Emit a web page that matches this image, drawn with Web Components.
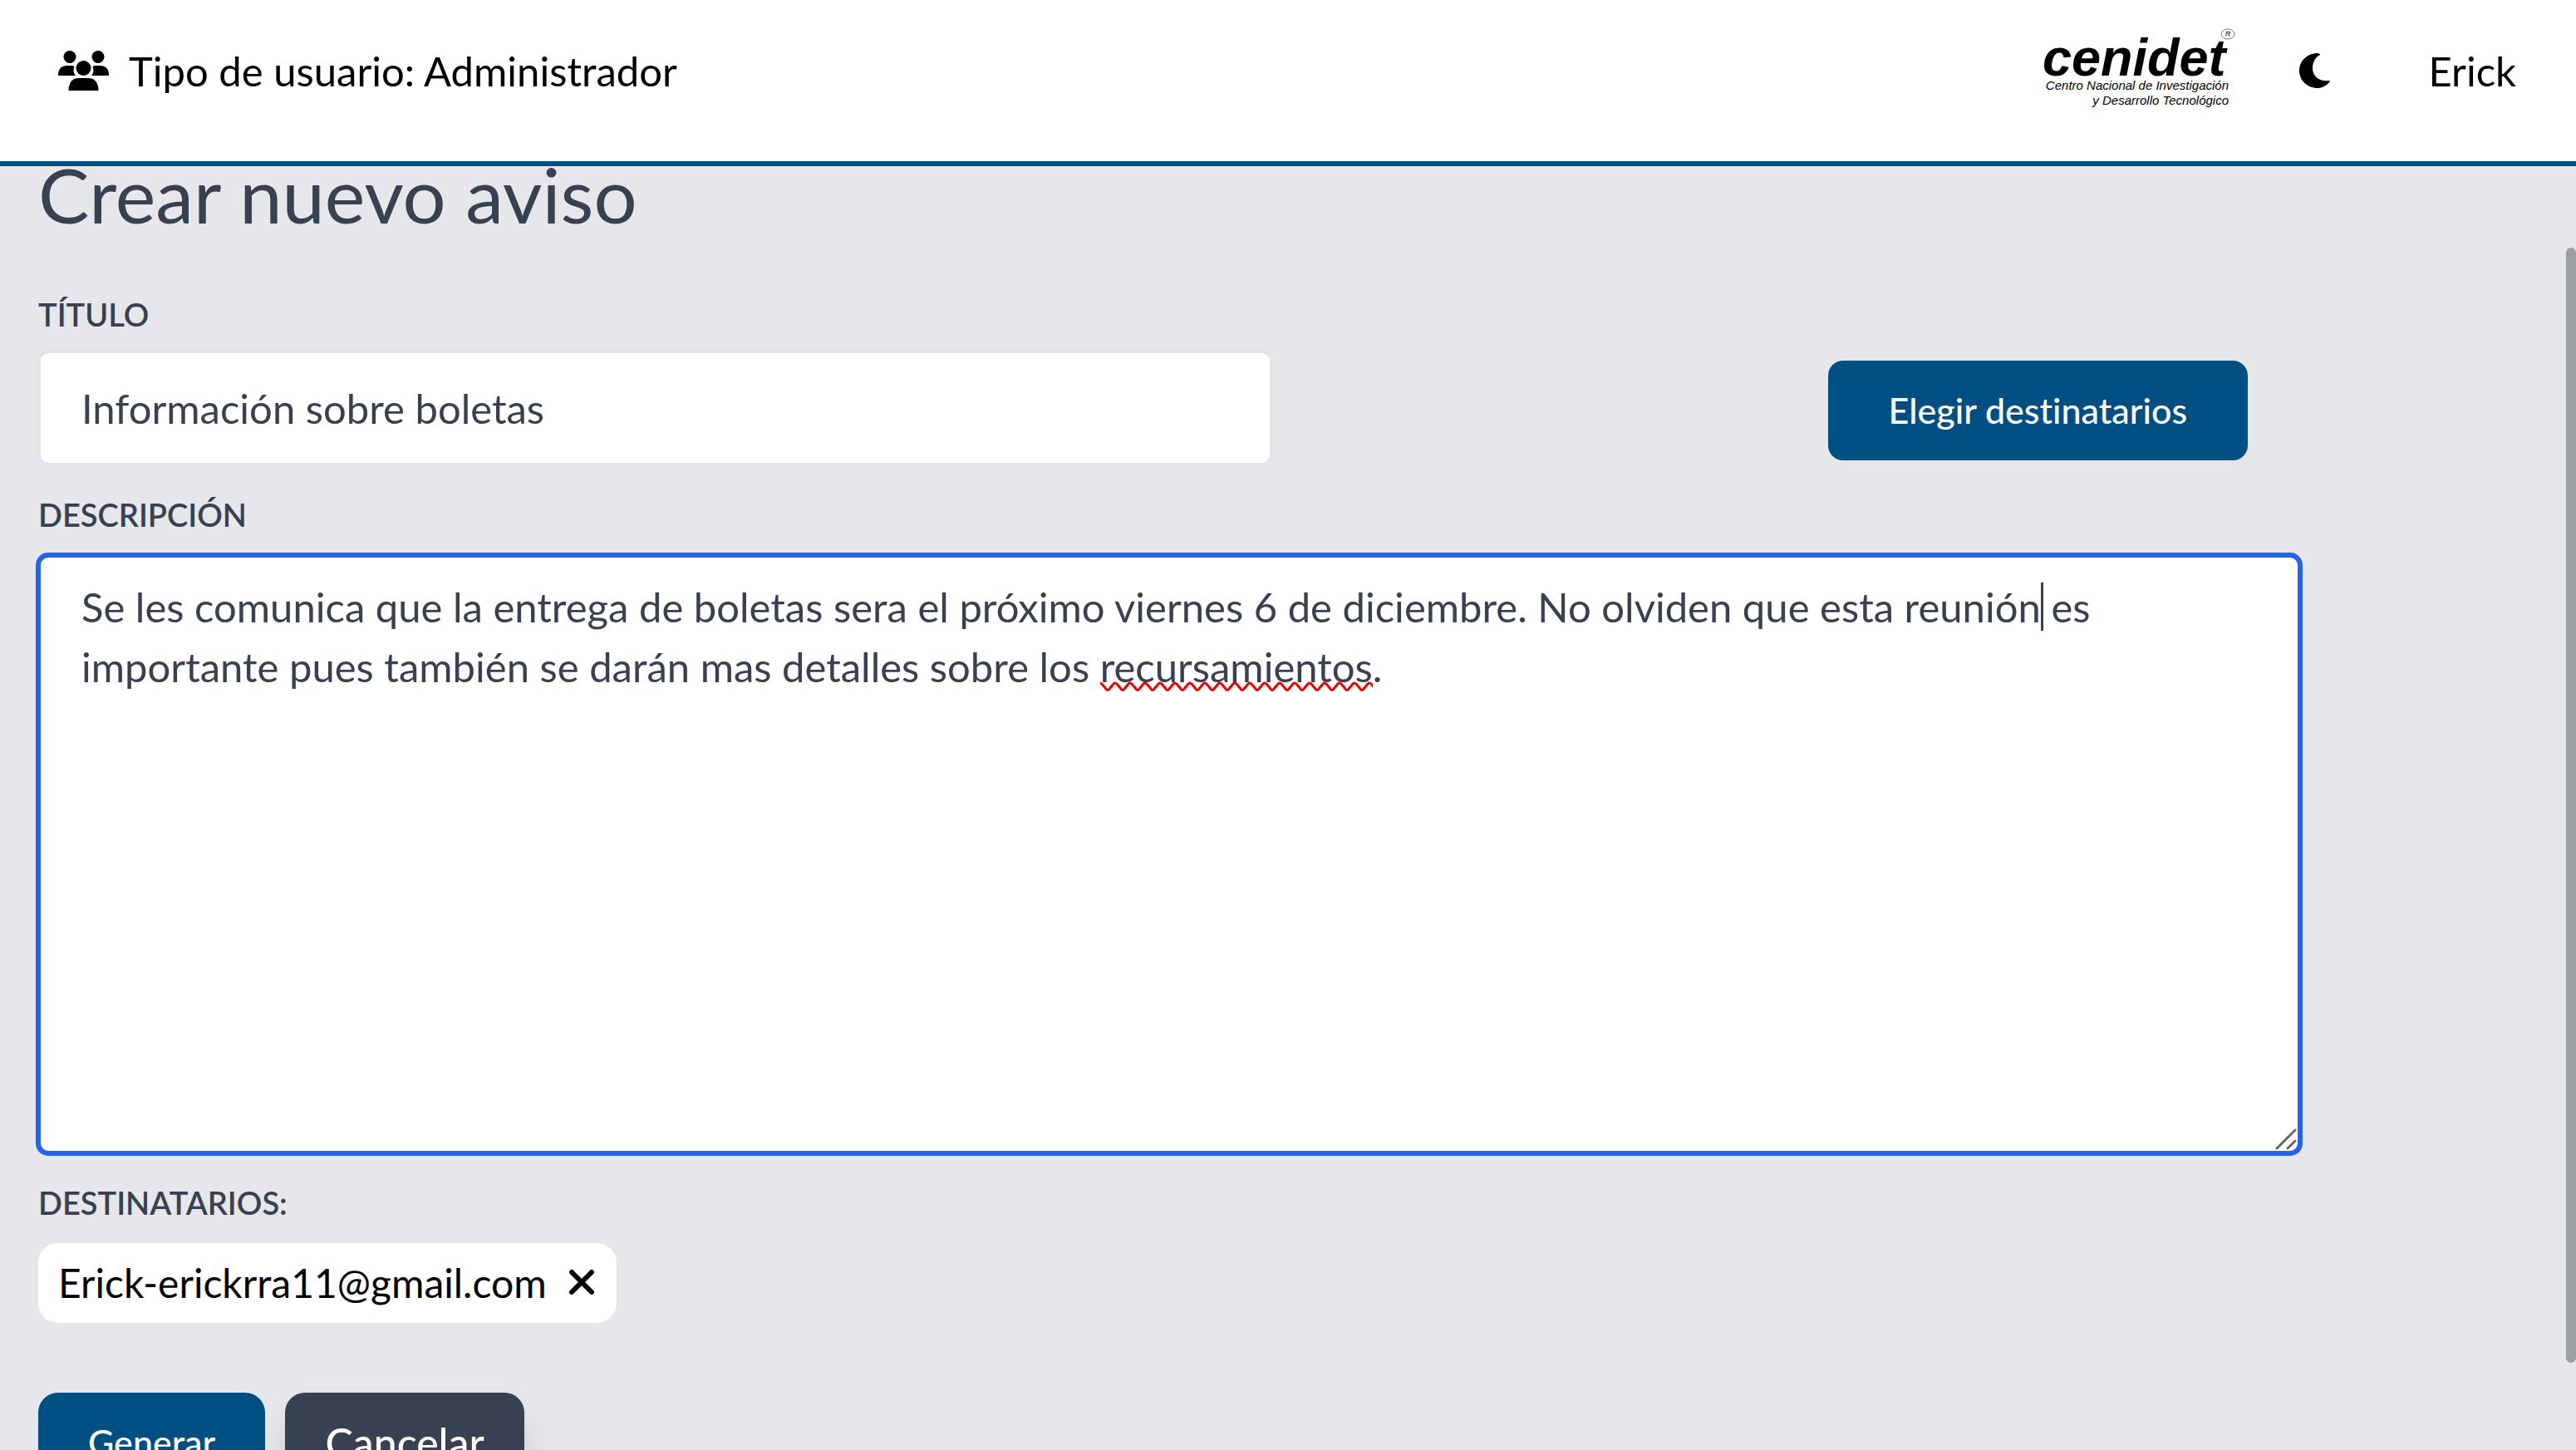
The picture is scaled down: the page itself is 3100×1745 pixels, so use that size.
<!DOCTYPE html>
<html lang="es">
<head>
<meta charset="utf-8">
<title>Crear nuevo aviso</title>
<style>
body { margin: 0; height: 100vh; overflow: hidden; background: #e5e7eb; color: #374151; font: 49px/72px Lato, "Liberation Sans", sans-serif; font-variant-ligatures: none; }
</style>
</head>
<body>
<aviso-app></aviso-app>
<script>
const define = (name, html, setup) => {
  const template = document.createElement('template');
  template.innerHTML = '<style>*{box-sizing:border-box}</style>' + html;
  customElements.define(name, class extends HTMLElement {
    connectedCallback() {
      if (this.shadowRoot) return;
      this.attachShadow({ mode: 'open' }).append(template.content.cloneNode(true));
      if (setup) setup.call(this, this.shadowRoot);
    }
  });
};

define('cenidet-logo', `
<style>
:host { display: block; }
svg { display: block; width: 240px; height: 100px; overflow: visible; font-family: "Liberation Sans", sans-serif; font-style: italic; }
</style>
<svg viewBox="0 0 240 100" role="img" aria-label="cenidet">
  <text x="7" y="56" font-size="63" font-weight="700">cenidet</text>
  <text x="231" y="73" font-size="15" text-anchor="end">Centro Nacional de Investigación</text>
  <text x="231" y="91" font-size="15" text-anchor="end">y Desarrollo Tecnológico</text>
  <ellipse cx="230" cy="6" rx="8" ry="6" fill="none" stroke="#777"/>
  <text x="230" y="9" font-size="9" text-anchor="middle">R</text>
</svg>`);

define('app-header', `
<style>
:host { display: block; flex: none; background: #fff; color: #000; border-bottom: 6px solid #004f83; }
header { display: flex; align-items: center; justify-content: space-between; height: 194px; padding: 0 72px 24px 70px; }
.user, .tools { display: flex; align-items: center; }
.user { gap: 24px; }
.people { width: 61px; height: 48px; }
cenidet-logo { margin-right: 76px; }
.theme { width: 37px; height: 42px; padding: 0; border: 0; background: none; margin-right: 119px; }
.theme svg { display: block; width: 37px; height: 42px; }
a { color: inherit; text-decoration: none; }
</style>
<header>
  <div class="user">
    <svg class="people" viewBox="0 0 61 48" aria-hidden="true">
      <circle cx="14" cy="7.500" r="7.500"/><circle cx="48" cy="7.500" r="7.500"/>
      <circle cx="30.500" cy="21" r="9"/>
      <path d="M0 30V28Q1 18 10 18H16Q18 18 19.500 19Q17 26 21 30ZM61 30V28Q60 18 51 18H45Q43 18 41.500 19Q44 26 40 30Z"/>
      <path d="M12.500 48V46Q14 33 25 33H36Q47 33 48.500 46V48Z"/>
    </svg>
    <span>Tipo de usuario: Administrador</span>
  </div>
  <div class="tools">
    <cenidet-logo></cenidet-logo>
    <button class="theme" type="button" aria-label="Modo oscuro"><svg viewBox="0 0 37 42"><path d="M22 0C10 0 0 9 0 21S10 42 22 42C28 42 33 39 37 34L36 33C25 35 16 28 16 18C16 11 19 5 25 2V1Z"/></svg></button>
    <a href="#perfil">Erick</a>
  </div>
</header>`);

define('primary-button', `
<style>
:host { display: block; }
button { display: block; height: 120px; padding: 0 var(--pad, 73px); border: 0; border-radius: var(--radius, 18px); background: #004f83; color: #fff; font: 500 43px/60px Lato, sans-serif; font-variant-ligatures: none; }
</style>
<button type="button"><slot></slot></button>`);

define('recipient-chip', `
<style>
:host { display: flex; align-items: center; width: max-content; height: 96px; gap: 24px; padding: 0 24px; background: #fff; color: #000; border-radius: 24px; font-size: 48px; }
button { padding: 0; border: 0; background: none; }
svg { display: block; width: 36px; height: 36px; }
</style>
<span><slot></slot></span>
<button type="button" aria-label="Quitar"><svg viewBox="0 0 36 36"><path d="M6 5L30 29M30 5L6 29" fill="none" stroke="#000" stroke-width="6" stroke-linecap="round"/></svg></button>`);

define('message-area', `
<style>
:host { display: block; }
label { display: block; font-size: 38px; line-height: 54px; font-weight: 600; margin-bottom: 22px; }
.box { position: relative; }
textarea, .mirror { display: block; width: 100%; padding: 23px 49px; border: 3px solid #2563eb; font: inherit; font-variant-ligatures: none; line-height: 72px; }
textarea { height: 720px; margin: 0; background: #fff; color: inherit; border-radius: 12px; box-shadow: 0 0 0 3px #2563eb; outline: 0; resize: none; overflow: hidden; }
.mirror { position: absolute; inset: 0; visibility: hidden; white-space: pre-wrap; }
.caret { position: absolute; width: 3px; height: 58px; background: #374151; }
.squiggle { position: absolute; height: 12px; }
.grip { position: absolute; right: 4px; bottom: 4px; width: 26px; height: 26px; }
</style>
<label for="text">DESCRIPCIÓN</label>
<div class="box">
  <textarea id="text" spellcheck="false">Se les comunica que la entrega de boletas sera el próximo viernes 6 de diciembre. No olviden que esta reunión es importante pues también se darán mas detalles sobre los recursamientos.</textarea>
  <span class="caret"></span>
  <svg class="squiggle" aria-hidden="true"><defs><pattern id="wave" width="18" height="12" patternUnits="userSpaceOnUse"><path d="M-2 3Q0 1 2 3L7 9Q9 12 11 9L16 3Q18 1 20 3" fill="none" stroke="#f00000" stroke-width="3"/></pattern></defs><rect width="100%" height="12" fill="url(#wave)"/></svg>
  <svg class="grip" viewBox="0 0 26 26" aria-hidden="true"><path d="M2 24L24 2M15 24L24 15" stroke="#666" stroke-width="3" stroke-linecap="round"/></svg>
</div>`, function (root) {
  const area = root.querySelector('textarea'), box = root.querySelector('.box');
  // Finds where a piece of the message falls by laying it out in a short-lived copy.
  const locate = (word) => {
    const mirror = document.createElement('div');
    mirror.className = 'mirror';
    mirror.textContent = area.value;
    box.append(mirror);
    const start = area.value.indexOf(word), range = document.createRange();
    range.setStart(mirror.firstChild, start);
    range.setEnd(mirror.firstChild, start + word.length);
    const r = range.getBoundingClientRect(), b = box.getBoundingClientRect();
    mirror.remove();
    return { left: r.left - b.left, right: r.right - b.left, middle: (r.top + r.bottom) / 2 - b.top };
  };
  const place = () => {
    const end = locate('reunión'), typo = locate('recursamientos');
    Object.assign(root.querySelector('.caret').style, { left: Math.round(end.right) + 'px', top: Math.round(end.middle - 29) + 'px' });
    Object.assign(root.querySelector('.squiggle').style, { left: Math.round(typo.left) + 'px', top: Math.round(typo.middle + 18) + 'px', width: Math.round(typo.right - typo.left) + 'px' });
  };
  place();
  addEventListener('resize', place);
});

define('aviso-form', `
<style>
:host { display: block; width: 90.5%; }
h1 { margin: 0 0 63px; font-size: 92px; line-height: 108px; font-weight: 400; }
.label { display: block; font-size: 38px; line-height: 54px; font-weight: 600; }
.row { display: grid; grid-template-columns: 6fr 5fr; align-items: end; margin: 17px 0 32px; }
input { display: block; width: 100%; height: 138px; padding: 0 49px; border: 3px solid #e2e4e8; border-radius: 12px; background: #fff; background-clip: padding-box; color: inherit; font: inherit; font-variant-ligatures: none; outline: 0; }
.row primary-button { justify-self: end; margin: 0 63px 6px 0; }
message-area { margin-bottom: 32px; }
recipient-chip { margin: 22px 0 84px; }
.actions { display: flex; gap: 24px; --pad: 60px; --radius: 24px; }
.cancel { height: 120px; padding: 0 48px; border: 0; border-radius: 24px; background: #374151; color: #fff; font: 500 50px/72px Lato, sans-serif; box-shadow: 0 30px 45px #0000001a; }
</style>
<form>
  <h1>Crear nuevo aviso</h1>
  <label class="label" for="title">TÍTULO</label>
  <div class="row">
    <input id="title" type="text" value="Información sobre boletas">
    <primary-button>Elegir destinatarios</primary-button>
  </div>
  <message-area></message-area>
  <span class="label">DESTINATARIOS:</span>
  <recipient-chip>Erick-erickrra11@gmail.com</recipient-chip>
  <div class="actions">
    <primary-button>Generar</primary-button>
    <button class="cancel" type="button">Cancelar</button>
  </div>
</form>`);

define('aviso-app', `
<style>
:host { display: flex; flex-direction: column; height: 100vh; }
main { position: relative; flex: 1; min-height: 0; overflow: hidden; padding: 0 46px; }
aviso-form { margin-top: -20px; }
.thumb { position: absolute; right: 0; top: 98px; bottom: 105px; width: 12px; border-radius: 6px; background: #9ca0a4; }
</style>
<app-header></app-header>
<main><aviso-form></aviso-form><div class="thumb"></div></main>`);
</script>
</body>
</html>
